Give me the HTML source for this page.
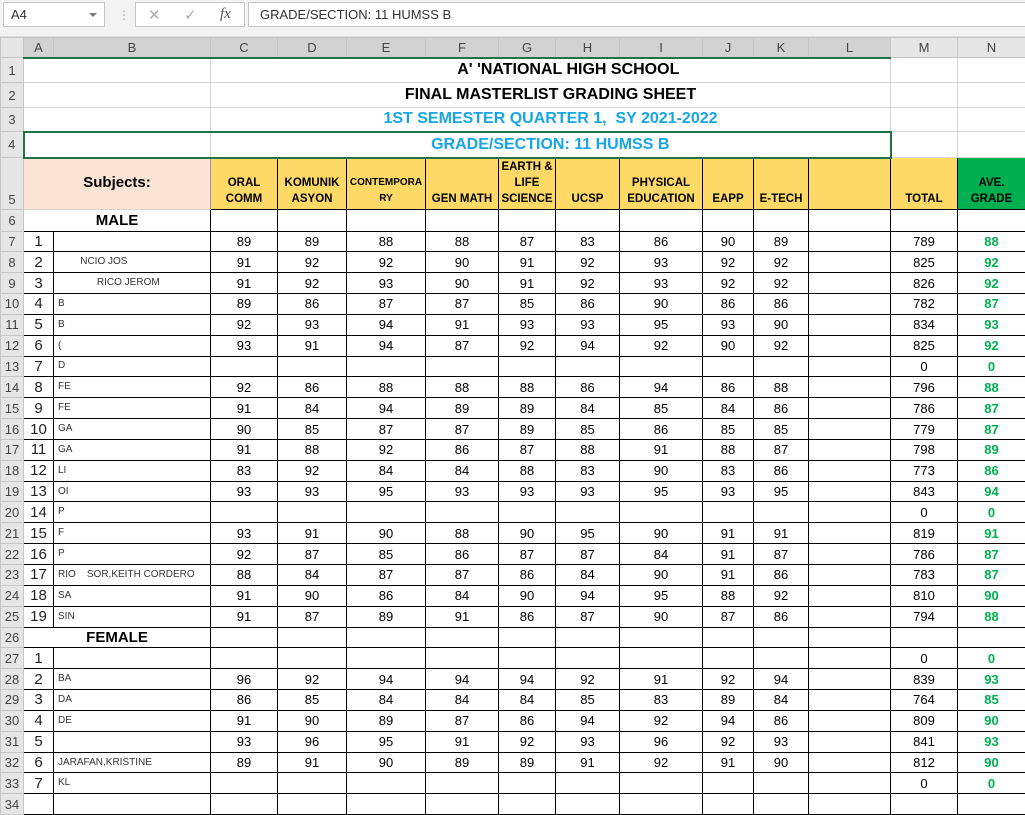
<!DOCTYPE html>
<html><head><meta charset="utf-8"><style>
*{box-sizing:border-box;margin:0;padding:0}
body{width:1025px;height:798px;overflow:hidden;background:#fff;font-family:"Liberation Sans",sans-serif;position:relative}
.top{position:absolute;left:0;top:0;width:1025px;height:37px;background:#f3f3f3;border-bottom:1px solid #dcdcdc}
.nb{position:absolute;left:3px;top:2px;width:102px;height:25px;background:#fff;border:1px solid #c6c6c6;font-size:13px;color:#333;padding:4px 0 0 7px}
.nb:after{content:"";position:absolute;right:7px;top:10px;border:4px solid transparent;border-top:4px solid #777}
.dots{position:absolute;left:118px;top:8px;color:#aaa;font-size:12px}
.fxb{position:absolute;left:135px;top:2px;width:110px;height:25px;background:#fff;border:1px solid #c6c6c6;color:#aaa;font-size:15px}
.fml{position:absolute;left:248px;top:2px;width:790px;height:25px;background:#fff;border:1px solid #c6c6c6;font-size:13px;color:#333;padding:4px 0 0 11px}
table{position:absolute;left:0;top:37px;border-collapse:collapse;table-layout:fixed;width:1025px}
td{overflow:hidden;white-space:nowrap;text-align:center;font-size:13px;color:#000;padding:0;border:1px solid #d4d4d4;line-height:1}
.ch td{background:#e6e6e6;color:#444;font-size:13px;border-color:#c6c6c6;height:20px}
.ch td.s{background:#d2d2d2;border-bottom:2px solid #217346}
td.rh{background:#e6e6e6;color:#444;font-size:13px;border-color:#c6c6c6;text-align:center}
.t1{font-weight:bold;font-size:16px}
.bl{color:#16a6e6}
.h5 td{background:#fed966;border:1px solid #000;font-weight:bold;font-size:11.5px;line-height:16px;vertical-align:bottom;padding-bottom:2px;white-space:normal}
.h5 td.rh{background:#e6e6e6;border-color:#c6c6c6;font-weight:normal;font-size:13px;line-height:1}
.h5 td.sub{background:#fbe4d5;font-size:15px;vertical-align:middle;border:1px solid #d4d4d4;border-right:1px solid #999}
.h5 td.gr{background:#00b050}
.d td{border:1px solid #000;height:20.85px}
.d td.rh{border-color:#c6c6c6}
.d td.n{font-size:15px;text-align:center;border-right:1px solid #000;color:#222}
.d td.nm{text-align:left;font-size:10px;color:#333;padding-left:4px}
.d td.g{color:#00b050;font-weight:bold}
.sec td.ab{font-weight:bold;font-size:15px;border-left:1px solid #c6c6c6}
</style></head><body>
<div class="top"><div class="nb">A4</div><div class="dots">⋮</div><div class="fxb"><span style="position:absolute;left:12px;top:3px">✕</span><span style="position:absolute;left:48px;top:3px">✓</span><span style="position:absolute;left:84px;top:3px;color:#555;font-style:italic;font-family:'Liberation Serif',serif">fx</span></div><div class="fml">GRADE/SECTION: 11 HUMSS B</div></div>
<table>
<colgroup><col style="width:23px"><col style="width:30px"><col style="width:157px"><col style="width:67px"><col style="width:69px"><col style="width:79px"><col style="width:73px"><col style="width:57px"><col style="width:64px"><col style="width:83px"><col style="width:51px"><col style="width:55px"><col style="width:82px"><col style="width:67px"><col style="width:68px"></colgroup>
<tr class="ch"><td></td><td class="s">A</td><td class="s">B</td><td class="s">C</td><td class="s">D</td><td class="s">E</td><td class="s">F</td><td class="s">G</td><td class="s">H</td><td class="s">I</td><td class="s">J</td><td class="s">K</td><td class="s">L</td><td>M</td><td>N</td></tr>
<tr style="height:25px"><td class="rh">1</td><td colspan="2"></td><td colspan="10" class="t1">&nbsp;&nbsp;&nbsp;&nbsp;&nbsp;&nbsp;&nbsp;&nbsp;A' 'NATIONAL HIGH SCHOOL</td><td></td><td></td></tr>
<tr style="height:25px"><td class="rh">2</td><td colspan="2"></td><td colspan="10" class="t1">FINAL MASTERLIST GRADING SHEET</td><td></td><td></td></tr>
<tr style="height:24px"><td class="rh">3</td><td colspan="2"></td><td colspan="10" class="t1 bl">1ST SEMESTER QUARTER 1,&nbsp; SY 2021-2022</td><td></td><td></td></tr>
<tr style="height:26px"><td class="rh">4</td><td colspan="2" style="border:2px solid #217346;border-right:1px solid #d4d4d4"></td><td colspan="10" class="t1 bl" style="border:2px solid #217346;border-left:none">GRADE/SECTION: 11 HUMSS B</td><td></td><td></td></tr>
<tr class="h5" style="height:51px"><td class="rh" style="vertical-align:bottom;padding-bottom:3px">5</td><td colspan="2" class="sub">Subjects:</td><td>ORAL<br>COMM</td><td>KOMUNIK<br>ASYON</td><td style="font-size:10px">CONTEMPORA<br>RY</td><td>GEN MATH</td><td>EARTH &amp;<br>LIFE<br>SCIENCE</td><td>UCSP</td><td>PHYSICAL<br>EDUCATION</td><td>EAPP</td><td>E-TECH</td><td></td><td>TOTAL</td><td class="gr">AVE.<br>GRADE</td></tr>
<tr class="d sec" style="height:22px"><td class="rh">6</td><td colspan="2" class="ab" style="border-top:1px solid #d4d4d4;border-bottom:1px solid #000">MALE</td><td></td><td></td><td></td><td></td><td></td><td></td><td></td><td></td><td></td><td></td><td></td><td></td></tr>
<tr class="d"><td class="rh">7</td><td class="n">1</td><td class="nm"></td><td>89</td><td>89</td><td>88</td><td>88</td><td>87</td><td>83</td><td>86</td><td>90</td><td>89</td><td></td><td>789</td><td class="g">88</td></tr>
<tr class="d"><td class="rh">8</td><td class="n">2</td><td class="nm">&nbsp;&nbsp;&nbsp;&nbsp;&nbsp;&nbsp;&nbsp;&nbsp;NCIO JOS</td><td>91</td><td>92</td><td>92</td><td>90</td><td>91</td><td>92</td><td>93</td><td>92</td><td>92</td><td></td><td>825</td><td class="g">92</td></tr>
<tr class="d"><td class="rh">9</td><td class="n">3</td><td class="nm">&nbsp;&nbsp;&nbsp;&nbsp;&nbsp;&nbsp;&nbsp;&nbsp;&nbsp;&nbsp;&nbsp;&nbsp;&nbsp;&nbsp;RICO JEROM</td><td>91</td><td>92</td><td>93</td><td>90</td><td>91</td><td>92</td><td>93</td><td>92</td><td>92</td><td></td><td>826</td><td class="g">92</td></tr>
<tr class="d"><td class="rh">10</td><td class="n">4</td><td class="nm">B</td><td>89</td><td>86</td><td>87</td><td>87</td><td>85</td><td>86</td><td>90</td><td>86</td><td>86</td><td></td><td>782</td><td class="g">87</td></tr>
<tr class="d"><td class="rh">11</td><td class="n">5</td><td class="nm">B</td><td>92</td><td>93</td><td>94</td><td>91</td><td>93</td><td>93</td><td>95</td><td>93</td><td>90</td><td></td><td>834</td><td class="g">93</td></tr>
<tr class="d"><td class="rh">12</td><td class="n">6</td><td class="nm">(</td><td>93</td><td>91</td><td>94</td><td>87</td><td>92</td><td>94</td><td>92</td><td>90</td><td>92</td><td></td><td>825</td><td class="g">92</td></tr>
<tr class="d"><td class="rh">13</td><td class="n">7</td><td class="nm">D</td><td></td><td></td><td></td><td></td><td></td><td></td><td></td><td></td><td></td><td></td><td>0</td><td class="g">0</td></tr>
<tr class="d"><td class="rh">14</td><td class="n">8</td><td class="nm">FE</td><td>92</td><td>86</td><td>88</td><td>88</td><td>88</td><td>86</td><td>94</td><td>86</td><td>88</td><td></td><td>796</td><td class="g">88</td></tr>
<tr class="d"><td class="rh">15</td><td class="n">9</td><td class="nm">FE</td><td>91</td><td>84</td><td>94</td><td>89</td><td>89</td><td>84</td><td>85</td><td>84</td><td>86</td><td></td><td>786</td><td class="g">87</td></tr>
<tr class="d"><td class="rh">16</td><td class="n">10</td><td class="nm">GA</td><td>90</td><td>85</td><td>87</td><td>87</td><td>89</td><td>85</td><td>86</td><td>85</td><td>85</td><td></td><td>779</td><td class="g">87</td></tr>
<tr class="d"><td class="rh">17</td><td class="n">11</td><td class="nm">GA</td><td>91</td><td>88</td><td>92</td><td>86</td><td>87</td><td>88</td><td>91</td><td>88</td><td>87</td><td></td><td>798</td><td class="g">89</td></tr>
<tr class="d"><td class="rh">18</td><td class="n">12</td><td class="nm">LI</td><td>83</td><td>92</td><td>84</td><td>84</td><td>88</td><td>83</td><td>90</td><td>83</td><td>86</td><td></td><td>773</td><td class="g">86</td></tr>
<tr class="d"><td class="rh">19</td><td class="n">13</td><td class="nm">OI</td><td>93</td><td>93</td><td>95</td><td>93</td><td>93</td><td>93</td><td>95</td><td>93</td><td>95</td><td></td><td>843</td><td class="g">94</td></tr>
<tr class="d"><td class="rh">20</td><td class="n">14</td><td class="nm">P</td><td></td><td></td><td></td><td></td><td></td><td></td><td></td><td></td><td></td><td></td><td>0</td><td class="g">0</td></tr>
<tr class="d"><td class="rh">21</td><td class="n">15</td><td class="nm">F</td><td>93</td><td>91</td><td>90</td><td>88</td><td>90</td><td>95</td><td>90</td><td>91</td><td>91</td><td></td><td>819</td><td class="g">91</td></tr>
<tr class="d"><td class="rh">22</td><td class="n">16</td><td class="nm">P</td><td>92</td><td>87</td><td>85</td><td>86</td><td>87</td><td>87</td><td>84</td><td>91</td><td>87</td><td></td><td>786</td><td class="g">87</td></tr>
<tr class="d"><td class="rh">23</td><td class="n">17</td><td class="nm">RIO&nbsp;&nbsp;&nbsp;&nbsp;SOR,KEITH CORDERO</td><td>88</td><td>84</td><td>87</td><td>87</td><td>86</td><td>84</td><td>90</td><td>91</td><td>86</td><td></td><td>783</td><td class="g">87</td></tr>
<tr class="d"><td class="rh">24</td><td class="n">18</td><td class="nm">SA</td><td>91</td><td>90</td><td>86</td><td>84</td><td>90</td><td>94</td><td>95</td><td>88</td><td>92</td><td></td><td>810</td><td class="g">90</td></tr>
<tr class="d"><td class="rh">25</td><td class="n">19</td><td class="nm">SIN</td><td>91</td><td>87</td><td>89</td><td>91</td><td>86</td><td>87</td><td>90</td><td>87</td><td>86</td><td></td><td>794</td><td class="g">88</td></tr>
<tr class="d sec"><td class="rh">26</td><td colspan="2" class="ab">FEMALE</td><td></td><td></td><td></td><td></td><td></td><td></td><td></td><td></td><td></td><td></td><td></td><td></td></tr>
<tr class="d"><td class="rh">27</td><td class="n">1</td><td class="nm"></td><td></td><td></td><td></td><td></td><td></td><td></td><td></td><td></td><td></td><td></td><td>0</td><td class="g">0</td></tr>
<tr class="d"><td class="rh">28</td><td class="n">2</td><td class="nm">BA</td><td>96</td><td>92</td><td>94</td><td>94</td><td>94</td><td>92</td><td>91</td><td>92</td><td>94</td><td></td><td>839</td><td class="g">93</td></tr>
<tr class="d"><td class="rh">29</td><td class="n">3</td><td class="nm">DA</td><td>86</td><td>85</td><td>84</td><td>84</td><td>84</td><td>85</td><td>83</td><td>89</td><td>84</td><td></td><td>764</td><td class="g">85</td></tr>
<tr class="d"><td class="rh">30</td><td class="n">4</td><td class="nm">DE</td><td>91</td><td>90</td><td>89</td><td>87</td><td>86</td><td>94</td><td>92</td><td>94</td><td>86</td><td></td><td>809</td><td class="g">90</td></tr>
<tr class="d"><td class="rh">31</td><td class="n">5</td><td class="nm"></td><td>93</td><td>96</td><td>95</td><td>91</td><td>92</td><td>93</td><td>96</td><td>92</td><td>93</td><td></td><td>841</td><td class="g">93</td></tr>
<tr class="d"><td class="rh">32</td><td class="n">6</td><td class="nm">JARAFAN,KRISTINE</td><td>89</td><td>91</td><td>90</td><td>89</td><td>89</td><td>91</td><td>92</td><td>91</td><td>90</td><td></td><td>812</td><td class="g">90</td></tr>
<tr class="d"><td class="rh">33</td><td class="n">7</td><td class="nm">KL</td><td></td><td></td><td></td><td></td><td></td><td></td><td></td><td></td><td></td><td></td><td>0</td><td class="g">0</td></tr>
<tr class="d"><td class="rh">34</td><td class="n"></td><td></td><td></td><td></td><td></td><td></td><td></td><td></td><td></td><td></td><td></td><td></td><td></td><td></td></tr>
</table>
</body></html>
